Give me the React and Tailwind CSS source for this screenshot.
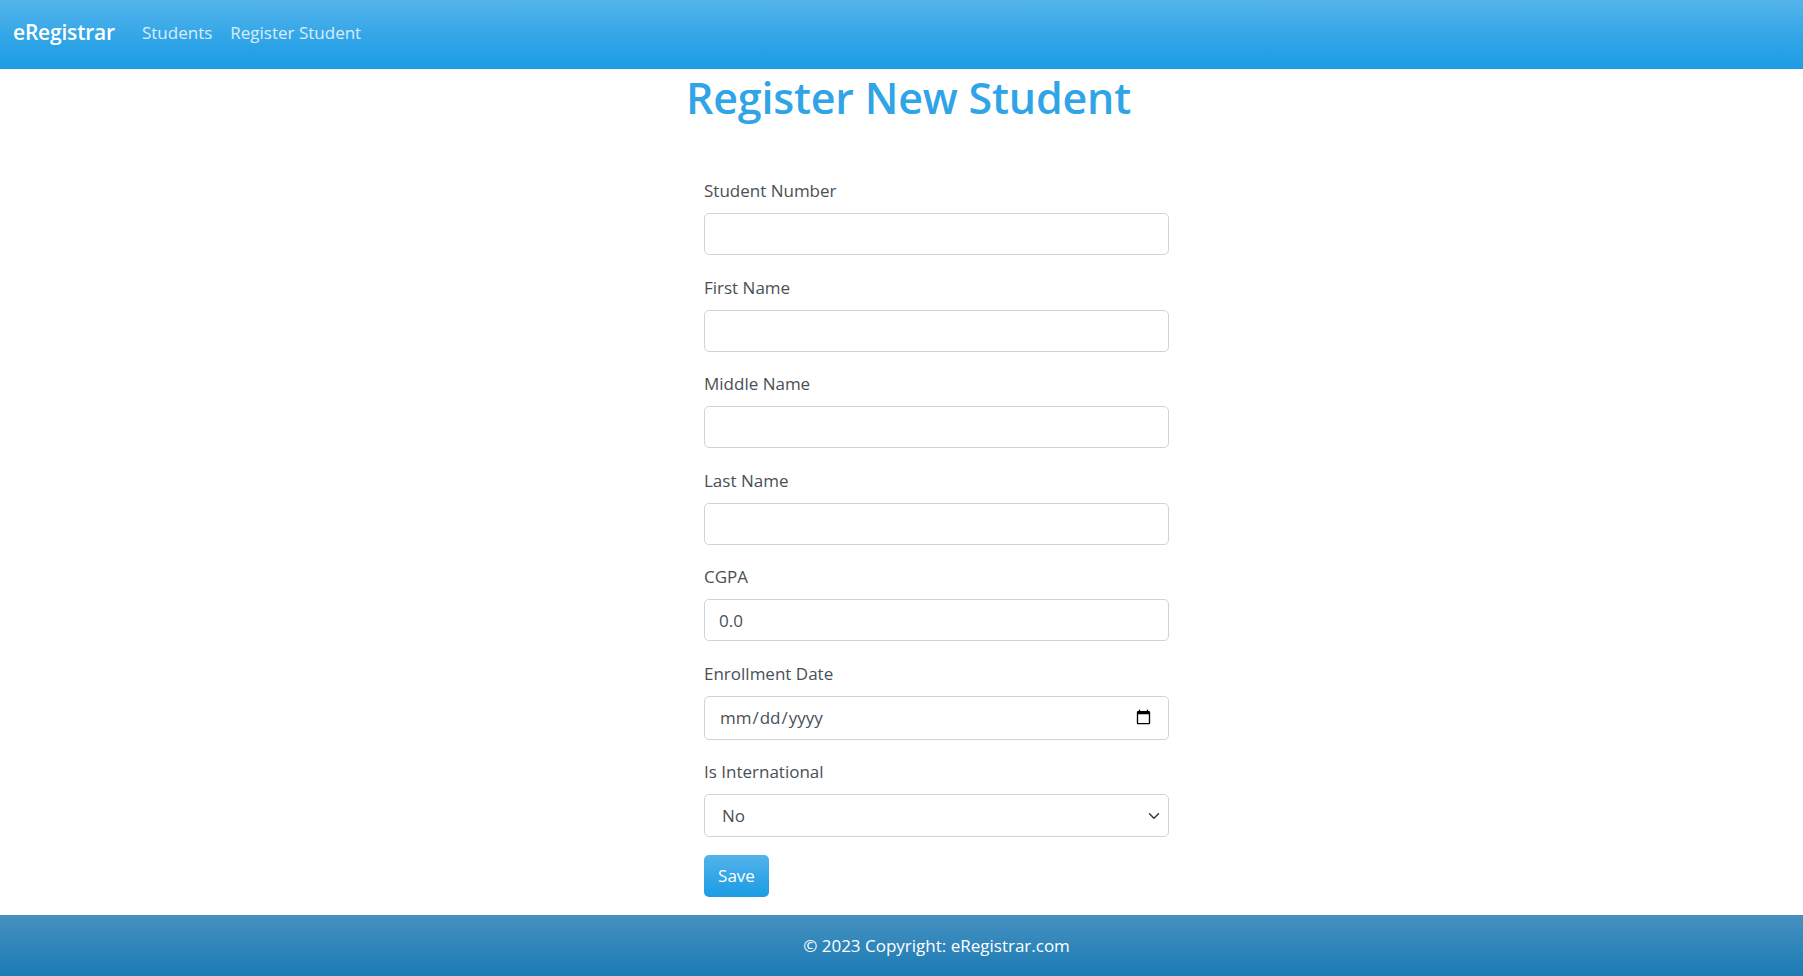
import { useState } from "react";

const fields = [
  { id: "studentNumber", label: "Student Number" },
  { id: "firstName", label: "First Name" },
  { id: "middleName", label: "Middle Name" },
  { id: "lastName", label: "Last Name" },
  { id: "cgpa", label: "CGPA" },
];

export default function App() {
  const [form, setForm] = useState({
    studentNumber: "",
    firstName: "",
    middleName: "",
    lastName: "",
    cgpa: "0.0",
    enrollmentDate: "",
    isInternational: "No",
  });

  const handleChange = (e) => {
    setForm({ ...form, [e.target.name]: e.target.value });
  };

  return (
    <div className="min-h-screen flex flex-col bg-white font-['Open_Sans','Noto_Sans',sans-serif] text-[#495057]">
      {/* Navbar */}
      <nav className="h-[69px] flex items-center px-[13px] pb-[3px] bg-[linear-gradient(#54b4eb,#2fa4e7_60%,#1d9ce5)]">
        <a href="#" className="text-white font-semibold text-[21px] mr-[18px] tracking-[-0.2px]">
          eRegistrar
        </a>
        <a href="#" className="text-white/80 text-[17px] px-[9px]">
          Students
        </a>
        <a href="#" className="text-white/80 text-[17px] px-[9px]">
          Register Student
        </a>
      </nav>

      {/* Main */}
      <main className="flex-1">
        <h1 className="text-center pl-[14px] text-[#2fa4e7] font-semibold text-[43px] leading-[55px] mt-[1px] tracking-[-0.2px]">
          Register New Student
        </h1>

        <div className="flex justify-center pl-[70px] mt-[52px]">
          <form className="w-[465px]" onSubmit={(e) => e.preventDefault()}>
            {fields.map((f) => (
              <div key={f.id} className="mb-[18.5px]">
                <label htmlFor={f.id} className="block text-[17px] leading-[27px] mb-[9px]">
                  {f.label}
                </label>
                <input
                  id={f.id}
                  name={f.id}
                  type="text"
                  value={form[f.id]}
                  onChange={handleChange}
                  className="block w-full h-[42px] px-[14px] text-[17px] text-[#495057] border border-[#ced4da] rounded-[5px] outline-none"
                />
              </div>
            ))}

            <div className="mb-[18.5px]">
              <label htmlFor="enrollmentDate" className="block text-[17px] leading-[27px] mb-[9px]">
                Enrollment Date
              </label>
              <input
                id="enrollmentDate"
                name="enrollmentDate"
                type="date"
                value={form.enrollmentDate}
                onChange={handleChange}
                className="block w-full h-[44px] px-[14px] text-[17px] text-[#495057] border border-[#ced4da] rounded-[5px] outline-none"
              />
            </div>

            <div className="mb-[18px]">
              <label htmlFor="isInternational" className="block text-[17px] leading-[27px] mb-[9px]">
                Is International
              </label>
              <div className="relative">
                <select
                  id="isInternational"
                  name="isInternational"
                  value={form.isInternational}
                  onChange={handleChange}
                  className="block w-full h-[43px] pl-[17px] pr-[40px] text-[17px] text-[#495057] bg-white border border-[#ced4da] rounded-[5px] appearance-none outline-none"
                >
                  <option>No</option>
                  <option>Yes</option>
                </select>
                <svg
                  className="absolute right-[7px] top-1/2 -translate-y-1/2 pointer-events-none"
                  width="16"
                  height="12"
                  viewBox="0 0 16 16"
                  fill="none"
                  stroke="#343a40"
                  strokeWidth="2"
                  strokeLinecap="round"
                  strokeLinejoin="round"
                >
                  <path d="m2 5 6 6 6-6" />
                </svg>
              </div>
            </div>

            <button
              type="submit"
              className="h-[42px] w-[65px] mb-[16px] text-white text-[17px] rounded-[5px] bg-[linear-gradient(#54b4eb,#2fa4e7_60%,#1d9ce5)]"
            >
              Save
            </button>
          </form>
        </div>
      </main>

      {/* Footer */}
      <footer className="h-[61px] flex items-center justify-center pl-[70px] text-white text-[17px] bg-[linear-gradient(#4591bf,#1b7bb5)]">
        © 2023 Copyright: eRegistrar.com
      </footer>
    </div>
  );
}
